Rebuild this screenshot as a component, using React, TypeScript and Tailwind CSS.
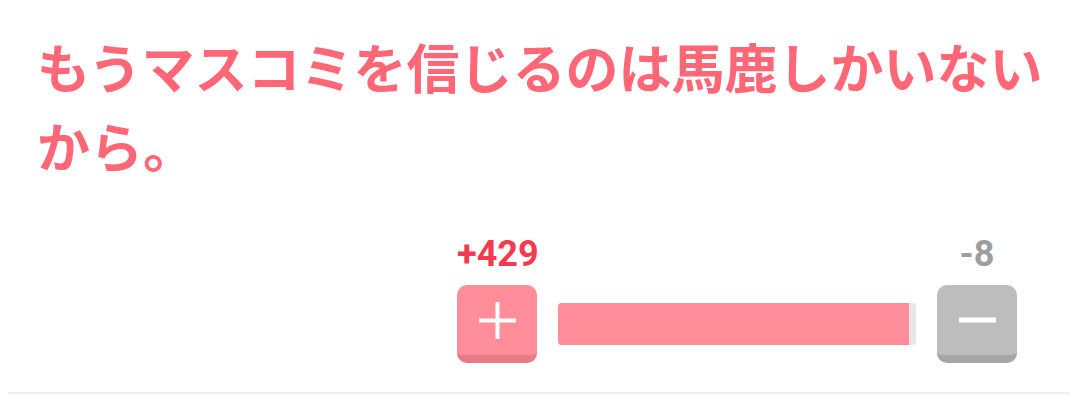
import React from "react";

const up = 429;
const down = 8;

function PlusIcon() {
  return (
    <svg width="37" height="37" viewBox="0 0 37 37" fill="none">
      <line x1="0" y1="18.5" x2="37" y2="18.5" stroke="#ffffff" strokeWidth="4" />
      <line x1="18.5" y1="0" x2="18.5" y2="37" stroke="#ffffff" strokeWidth="4" />
    </svg>
  );
}

function MinusIcon() {
  return (
    <svg width="37" height="6" viewBox="0 0 37 6" fill="none">
      <line x1="0" y1="3" x2="37" y2="3" stroke="#ffffff" strokeWidth="5" />
    </svg>
  );
}

export default function App() {
  const ratio = up / (up + down);

  return (
    <div className="w-[1078px] h-[408px] bg-white overflow-hidden">
      <div className="pl-[37px] pr-[20px] pt-[27px]">
        <h1
          className="text-[53px] leading-[79px] font-bold text-[#ff6676]"
          style={{ fontFamily: '"Noto Sans CJK JP", "Noto Sans", sans-serif' }}
        >
          もうマスコミを信じるのは馬鹿しかいないから。
        </h1>
      </div>

      {/* vote widget: counts over buttons, ratio bar between */}
      <div className="flex justify-end pr-[61px] mt-[51px]">
        <div
          className="grid grid-cols-[80px_358px_80px] gap-x-[21px] gap-y-[13px]"
          style={{ fontFamily: "Roboto, Arial, sans-serif" }}
        >
          <div className="text-center text-[36px] leading-[36px] font-bold text-[#f23b4e]">+{up}</div>
          <div />
          <div className="text-center text-[36px] leading-[36px] font-bold text-[#9e9e9e]">-{down}</div>

          <button
            type="button"
            className="h-[78px] rounded-[10px] bg-[#ff8d9a] border-b-[8px] border-[#e67a87] flex items-center justify-center"
          >
            <PlusIcon />
          </button>
          <div className="self-center h-[42px] rounded-[4px] bg-[#e6e6e6] overflow-hidden">
            <div className="h-full bg-[#ff8d9a]" style={{ width: `${ratio * 100}%` }} />
          </div>
          <button
            type="button"
            className="h-[78px] rounded-[10px] bg-[#bdbdbd] border-b-[8px] border-[#a6a6a6] flex items-center justify-center"
          >
            <MinusIcon />
          </button>
        </div>
      </div>

      <div className="mx-[8px] mt-[29px] h-[2px] bg-[#f0f0f0]" />
    </div>
  );
}
